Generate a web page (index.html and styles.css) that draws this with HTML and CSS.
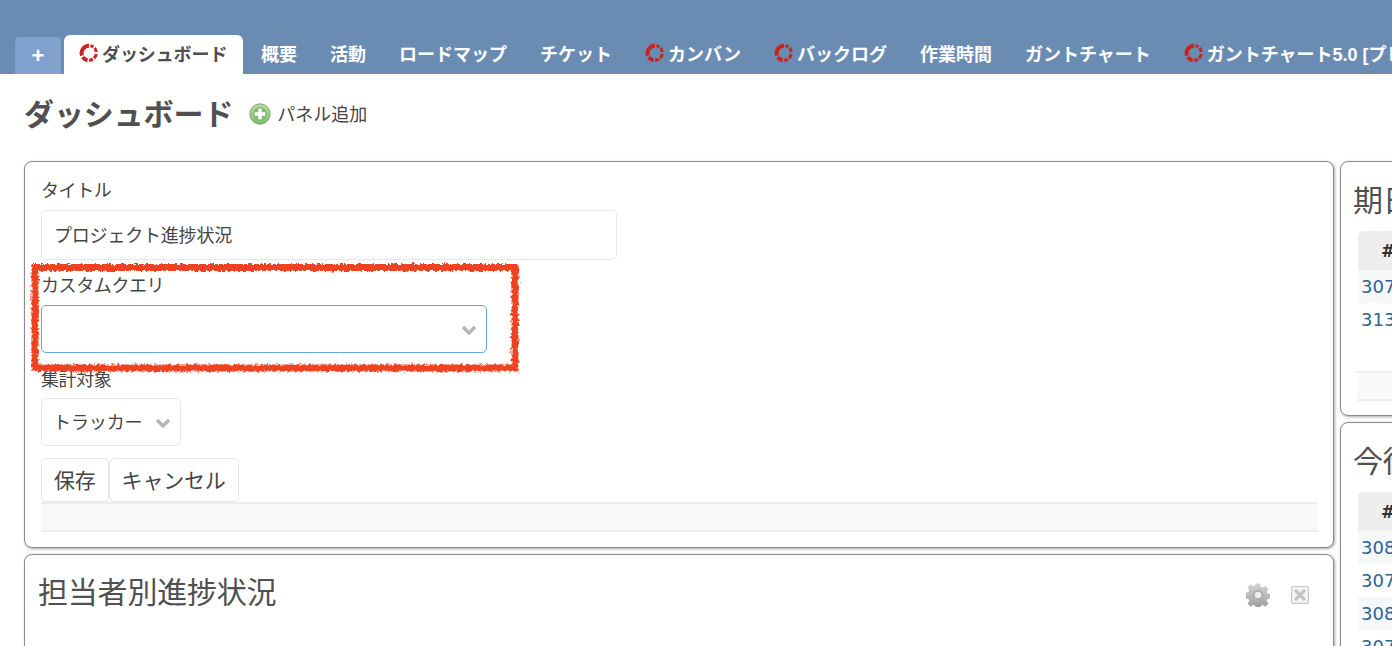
FILE: index.html
```html
<!DOCTYPE html>
<html lang="ja">
<head>
<meta charset="utf-8">
<title>ダッシュボード</title>
<link rel="stylesheet" href="styles.css">
</head>
<body>
<svg class="defs" width="0" height="0" aria-hidden="true">
  <defs>
    <symbol id="ring" viewBox="0 0 20 20">
      <g fill="none" stroke="#c9231f" stroke-linecap="butt">
        <path d="M10 2.8A7.4 7.4 0 0 0 3 12.6" stroke-width="4"/>
        <path d="M3.7 14.2A7.4 7.4 0 0 0 8.6 17.2" stroke-width="4"/>
        <path d="M10.2 17.3A7.4 7.4 0 0 0 13.8 16.2" stroke-width="3.2"/>
        <path d="M15 15.2A7.4 7.4 0 0 0 17.3 11" stroke-width="3"/>
        <path d="M17.3 9A7.4 7.4 0 0 0 15.6 5" stroke-width="3"/>
        <path d="M14.4 3.9A7.4 7.4 0 0 0 11.4 2.8" stroke-width="3"/>
      </g>
    </symbol>
  </defs>
</svg>
<header class="topbar">
  <nav class="tabs">
    <a class="tab tab-new">+</a>
    <a class="tab tab-active"><svg class="ring"><use href="#ring"/></svg>ダッシュボード</a>
    <a class="tab">概要</a>
    <a class="tab">活動</a>
    <a class="tab">ロードマップ</a>
    <a class="tab">チケット</a>
    <a class="tab"><svg class="ring"><use href="#ring"/></svg>カンバン</a>
    <a class="tab"><svg class="ring"><use href="#ring"/></svg>バックログ</a>
    <a class="tab">作業時間</a>
    <a class="tab">ガントチャート</a>
    <a class="tab"><svg class="ring"><use href="#ring"/></svg>ガントチャート5.0 [プレビュー]</a>
  </nav>
</header>
<main class="content">
  <div class="page-head">
    <h1 class="page-title">ダッシュボード</h1>
    <a class="add-link">
      <svg class="add-icon" viewBox="0 0 22 22">
        <defs><linearGradient id="g" x1="0" y1="0" x2="0" y2="1"><stop offset="0" stop-color="#bcdcaa"/><stop offset="1" stop-color="#7fb86c"/></linearGradient></defs>
        <circle cx="11" cy="11" r="10.2" fill="url(#g)" stroke="#79ad67" stroke-width="1"/>
        <circle cx="11" cy="11" r="7" fill="#86bd73"/>
        <path d="M11 5.8v10.4M5.8 11h10.4" stroke="#fff" stroke-width="3.4"/>
      </svg>パネル追加</a>
  </div>
  <div class="columns">
    <div class="col">
      <section class="panel panel-form">
        <label class="label">タイトル</label>
        <input class="input" type="text" value="プロジェクト進捗状況">
        <label class="label label-query">カスタムクエリ</label>
        <div class="select select-query"><svg class="chev" viewBox="0 0 16 10"><path d="M2 2l6 6 6-6" fill="none" stroke="#b5b5b5" stroke-width="3.4"/></svg></div>
        <label class="label label-target">集計対象</label>
        <div class="select select-target">トラッカー<svg class="chev" viewBox="0 0 16 10"><path d="M2 2l6 6 6-6" fill="none" stroke="#b5b5b5" stroke-width="3.4"/></svg></div>
        <div class="actions">
          <button class="btn" type="button">保存</button><button class="btn" type="button">キャンセル</button>
        </div>
        <div class="bar"></div>
      </section>
      <section class="panel panel-people">
        <h2 class="panel-title">担当者別進捗状況</h2>
        <div class="panel-tools">
          <svg class="gear" viewBox="0 0 24 24">
            <defs><linearGradient id="gg" x1="0" y1="0" x2="0" y2="1"><stop offset="0" stop-color="#d4d4d4"/><stop offset="1" stop-color="#9c9c9c"/></linearGradient></defs>
            <path fill="url(#gg)" d="M9.8 0.5h4.4l.6 3.2 1.9.8 2.7-1.8 3.1 3.1-1.8 2.7.8 1.9 3 .6v4.4l-3 .6-.8 1.9 1.8 2.7-3.1 3.1-2.7-1.8-1.9.8-.6 3h-4.4l-.6-3-1.9-.8-2.7 1.8-3.1-3.1 1.8-2.7-.8-1.9-3-.6V9.6l3-.6.8-1.9-1.8-2.7 3.1-3.1 2.7 1.8 1.9-.8z"/>
            <circle cx="12" cy="12" r="4" fill="#eee" stroke="#a8a8a8" stroke-width="1.4"/>
          </svg>
          <svg class="close" viewBox="0 0 18 18">
            <rect x="0.6" y="0.6" width="16.8" height="16.8" rx="1" fill="#f6f6f6" stroke="#c8c8c8" stroke-width="1.2"/>
            <path d="M4 4l10 10M14 4L4 14" stroke="#c4c4c4" stroke-width="3.2"/>
          </svg>
        </div>
      </section>
    </div>
    <div class="col">
      <section class="panel panel-side panel-due">
        <h2 class="panel-title">期日が過ぎたチケット</h2>
        <table class="issues">
          <thead><tr><th>#</th><th>題名</th></tr></thead>
          <tbody>
            <tr><td><a>30712</a></td><td></td></tr>
            <tr><td><a>31345</a></td><td></td></tr>
            <tr><td></td><td></td></tr>
          </tbody>
        </table>
        <div class="bar"></div>
      </section>
      <section class="panel panel-side">
        <h2 class="panel-title">今後の期日</h2>
        <table class="issues">
          <thead><tr><th>#</th><th>題名</th></tr></thead>
          <tbody>
            <tr><td><a>30821</a></td><td></td></tr>
            <tr><td><a>30764</a></td><td></td></tr>
            <tr><td><a>30833</a></td><td></td></tr>
            <tr><td><a>30758</a></td><td></td></tr>
          </tbody>
        </table>
      </section>
    </div>
  </div>
</main>
<svg class="scribble" viewBox="0 0 500 120" aria-hidden="true">
  <defs>
    <filter id="rough" x="-5%" y="-10%" width="110%" height="120%">
      <feTurbulence type="fractalNoise" baseFrequency="0.35" numOctaves="3" seed="4"/>
      <feDisplacementMap in="SourceGraphic" scale="5"/>
    </filter>
  </defs>
  <rect x="9" y="8.5" width="480" height="100.5" fill="none" stroke="#ee4323" stroke-width="7" filter="url(#rough)"/>
</svg>
</body>
</html>
```
FILE: styles.css
```css
* { box-sizing: border-box; }
html, body { margin: 0; height: 646px; overflow: hidden; }
body {
  position: relative;
  background: #fff;
  color: #505050;
  font-family: "Noto Sans CJK JP", "Liberation Sans", sans-serif;
  font-size: 18px;
}
.defs { position: absolute; }
.topbar {
  height: 74px;
  background: #6b8cb2;
  display: flex;
  align-items: flex-end;
  padding-left: 15px;
  overflow: hidden;
}
.tabs { display: flex; align-items: flex-end; white-space: nowrap; }
.tab {
  display: flex;
  align-items: center;
  height: 39px;
  padding: 0 16.5px 3px;
  color: #fff;
  font-weight: 700;
  font-size: 18px;
  font-family: "Liberation Sans", "Noto Sans CJK JP", sans-serif;
}
.tab-new {
  width: 46px;
  height: 37px;
  padding: 0;
  justify-content: center;
  background: #80a0ce;
  border-radius: 4px 4px 0 0;
  margin-right: 3px;
  font-size: 22px;
}
.tab-active {
  width: 179px;
  padding: 0 0 3px 15px;
  background: #fff;
  color: #505050;
  border-radius: 6px 6px 0 0;
  margin-right: 1.5px;
  letter-spacing: -0.1px;
}
.ring { width: 20px; height: 20px; margin-right: 3px; flex: none; }
.content { padding-left: 24px; }
.page-head {
  display: flex;
  align-items: center;
  height: 40px;
  margin-top: 19px;
  margin-bottom: 28px;
}
.page-title {
  margin: 0 0 2px;
  font-size: 30px;
  font-weight: 700;
  letter-spacing: -0.1px;
  color: #505050;
}
.add-link {
  display: flex;
  align-items: center;
  margin-left: 16px;
  font-size: 18px;
  color: #444;
}
.add-icon { width: 22px; height: 22px; margin-top: 1px; margin-right: 6px; }
.columns {
  display: grid;
  grid-template-columns: 1310px 600px;
  column-gap: 6px;
}
.col { display: flex; flex-direction: column; gap: 6px; }
.panel {
  position: relative;
  background: #fff;
  border: 1px solid #8a8a8a;
  border-radius: 8px;
  box-shadow: 1px 1px 3px rgba(0,0,0,.35);
}
.panel-form { height: 387px; padding: 15px 15px 0 16px; }
.label { display: block; height: 24px; line-height: 24px; font-size: 18px; color: #444; letter-spacing: -0.4px; }
.input {
  display: block;
  width: 576px;
  height: 50px;
  margin-top: 9px;
  padding: 0 12px 2px;
  border: 1px solid #e8e8e8;
  border-radius: 5px;
  background: #fff;
  color: #444;
  font: inherit;
  letter-spacing: -0.2px;
}
.label-query { margin-top: 12px; }
.label-target { margin-top: 13px; }
.select {
  display: flex;
  align-items: center;
  border: 1px solid #e6e6e6;
  border-radius: 5px;
  color: #444;
}
.select-query {
  width: 446px;
  height: 48px;
  margin-top: 9px;
  justify-content: flex-end;
  border-color: #66a6d9;
  padding-right: 9px;
  padding-top: 2px;
}
.select-target {
  width: 140px;
  height: 48px;
  margin-top: 8px;
  padding: 0 9px 2px 11px;
  justify-content: space-between;
  letter-spacing: -0.1px;
}
.chev { width: 16px; height: 10px; }
.select-target .chev { margin-top: 4px; }
.actions { display: flex; margin-top: 12px; }
.btn {
  height: 44px;
  padding: 0 12px 3px;
  background: #fff;
  border: 1px solid #e6e6e6;
  border-radius: 5px;
  color: #444;
  font-family: inherit;
  font-size: 21px;
  letter-spacing: -0.2px;
}
.bar {
  height: 30px;
  background: #f9f9f9;
  border-top: 2px solid #eee;
  border-bottom: 2px solid #eee;
}
.panel-people { height: 300px; padding: 15px 14px; }
.panel-title {
  margin: 0 0 0 -1px;
  height: 40px;
  line-height: 40px;
  font-size: 30px;
  font-weight: 400;
  letter-spacing: -0.2px;
  color: #505050;
  white-space: nowrap;
}
.panel-tools {
  position: absolute;
  top: 28px;
  right: 24px;
  display: flex;
  align-items: center;
  gap: 21px;
}
.gear { width: 24px; height: 24px; }
.close { width: 18px; height: 18px; }
.panel-side { padding: 16px 0 0 13px; }
.panel-due { height: 255px; }
.panel-side + .panel-side { height: 300px; }
.issues {
  width: 560px;
  margin: 13px 0 0 4px;
  border-collapse: collapse;
  table-layout: fixed;
}
.issues th {
  height: 39px;
  background: #eee;
  color: #333;
  font-family: "DejaVu Sans", sans-serif;
  font-size: 17px;
  font-weight: 700;
  text-align: center;
}
.issues th:first-child { width: 60px; border-radius: 5px 0 0 0; }
.issues td {
  height: 33px;
  padding: 0 3px;
  font-family: "DejaVu Sans", sans-serif;
  font-size: 18px;
  white-space: nowrap;
}
.issues tbody tr:nth-child(odd) td { background: #f6f7f8; }
.panel-due .issues tbody tr:nth-child(3) td { background: #fff; height: 35px; }
.issues a { color: #2a6496; }
.panel-due .bar { margin: 0 0 0 3px; }
.scribble {
  position: absolute;
  left: 26px;
  top: 259px;
  width: 500px;
  height: 120px;
  pointer-events: none;
}
```
